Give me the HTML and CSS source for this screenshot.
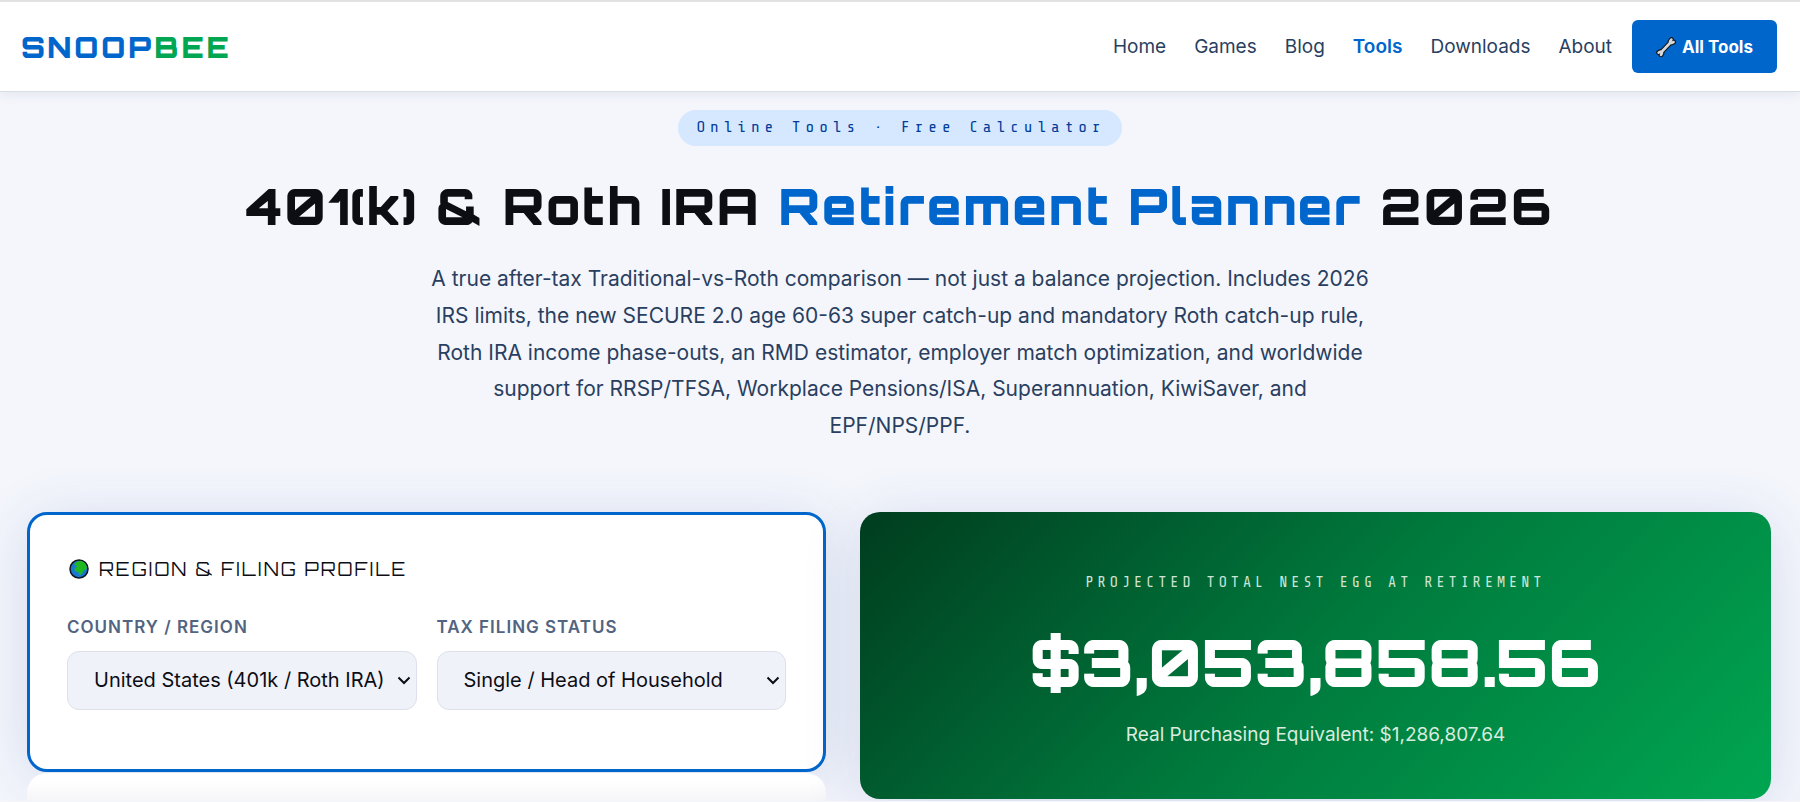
FILE: index.html
```html
<!DOCTYPE html>
<html lang="en">
<head>
  <meta charset="UTF-8">
  <meta name="viewport" content="width=device-width, initial-scale=1">
  <title>401(k) &amp; Roth IRA Retirement Planner 2026 - SnoopBee</title>
  <link rel="stylesheet" href="styles.css">
</head>
<body>
  <header class="site-header">
    <a class="logo" href="#">SNOOP<span>BEE</span></a>
    <nav class="nav">
      <a href="#">Home</a>
      <a href="#">Games</a>
      <a href="#">Blog</a>
      <a class="active" href="#">Tools</a>
      <a href="#">Downloads</a>
      <a href="#">About</a>
      <a class="nav-btn" href="#">
        <svg class="icon-wrench" viewBox="0 0 20 20" aria-hidden="true">
          <g fill="none" stroke-linecap="round" stroke-linejoin="round">
            <path d="M5 15.500 15 5M15.400 2.600 14 4.600 15.400 6 17.600 5M2.600 15.600 4.600 14.600 6 16 5 17.800" stroke="#14181d" stroke-width="5"/>
            <path d="M5 15.500 15 5M15.400 2.600 14 4.600 15.400 6 17.600 5M2.600 15.600 4.600 14.600 6 16 5 17.800" stroke="#d5d8dc" stroke-width="2.600"/>
          </g>
        </svg>
        All Tools
      </a>
    </nav>
  </header>

  <main>
    <section class="hero">
      <span class="badge">Online Tools · Free Calculator</span>
      <h1>401(k) &amp; Roth IRA <span>Retirement Planner</span> 2026</h1>
      <p>A true after-tax Traditional-vs-Roth comparison — not just a balance projection. Includes 2026 IRS limits, the new SECURE 2.0 age 60-63 super catch-up and mandatory Roth catch-up rule, Roth IRA income phase-outs, an RMD estimator, employer match optimization, and worldwide support for RRSP/TFSA, Workplace Pensions/ISA, Superannuation, KiwiSaver, and EPF/NPS/PPF.</p>
    </section>

    <div class="planner">
      <div class="inputs">
        <section class="card card-active">
          <h2>
            <svg class="icon-globe" viewBox="-2 -2 24 24" aria-hidden="true">
              <circle cx="10" cy="10" r="9" fill="#1878d2" stroke="#10161c" stroke-width="1.500"/>
              <path d="M5 5.500 8 2.600 12 1.800 16 4 18 8 17 11 14.500 11.600 12.800 15 10.800 16.600 9.600 13.400 6 12 5.400 9.400 8 7.600Z" fill="#1fb820"/>
            </svg>
            REGION &amp; FILING PROFILE
          </h2>
          <div class="fields">
            <div class="field">
              <label for="country">COUNTRY / REGION</label>
              <select id="country">
                <option>United States (401k / Roth IRA)</option>
              </select>
            </div>
            <div class="field">
              <label for="status">TAX FILING STATUS</label>
              <select id="status">
                <option>Single / Head of Household</option>
              </select>
            </div>
          </div>
        </section>
        <section class="card-next"></section>
      </div>

      <section class="result">
        <div class="result-label">PROJECTED TOTAL NEST EGG AT RETIREMENT</div>
        <div class="result-value">$3,053,858.56</div>
        <div class="result-sub">Real Purchasing Equivalent: $1,286,807.64</div>
      </section>
    </div>
  </main>
</body>
</html>
```
FILE: styles.css
```css
* {
  box-sizing: border-box;
}
body {
  margin: 0;
  background-color: #f4f6fc;
  color: #0d0d14;
  font-family: Inter, sans-serif;
}
a {
  text-decoration: none;
}

/* header */
.site-header {
  display: flex;
  align-items: center;
  justify-content: space-between;
  height: 92px;
  padding: 0 23px 0 21px;
  background-color: #fff;
  border-top: 2px solid #e2e2e2;
  border-bottom: 1px solid #d9dde8;
  box-shadow: 0 2px 12px rgba(20, 30, 80, 0.08);
}
.logo {
  color: #0066cc;
  font-family: Orbitron, "DejaVu Sans", sans-serif;
  font-size: 29px;
  font-weight: 900;
  letter-spacing: 3px;
}
.logo span {
  color: #00a651;
}
.nav {
  display: flex;
  align-items: center;
  gap: 28px;
  font-size: 19px;
  font-weight: 400;
}
.nav a {
  color: #2a3f5f;
}
.nav .active {
  color: #0066cc;
  font-weight: 600;
}
.nav .nav-btn {
  display: flex;
  align-items: center;
  gap: 6px;
  height: 53px;
  margin-left: -8px;
  padding: 0 24px;
  border-radius: 6px;
  background-color: #0066cc;
  color: #fff;
  font-size: 17px;
  font-weight: 700;
}
.icon-wrench {
  width: 20px;
  height: 20px;
}
.icon-globe {
  width: 24px;
  height: 24px;
}

/* hero */
.hero {
  display: flex;
  flex-direction: column;
  align-items: center;
  padding: 18px 24px 0;
  text-align: center;
}
.badge {
  height: 36px;
  padding: 0 16px 0 18px;
  border-radius: 18px;
  background-color: #d6e8ff;
  color: #003d99;
  font-family: "Share Tech Mono", "Liberation Mono", monospace;
  font-size: 16px;
  line-height: 34px;
  letter-spacing: 5px;
}
.hero h1 {
  margin: 25px 0 20px;
  font-family: Orbitron, "DejaVu Sans", sans-serif;
  font-size: 50px;
  font-weight: 900;
  line-height: 70px;
  letter-spacing: 2px;
}
.hero h1 span {
  color: #0066cc;
}
.hero p {
  max-width: 955px;
  margin: 0;
  color: #2a3f5f;
  font-size: 21px;
  line-height: 1.75;
}

/* planner */
.planner {
  display: grid;
  grid-template-columns: 799fr 911fr;
  gap: 34px;
  align-items: start;
  padding: 67px 29px 0 27px;
}
.card {
  border-radius: 20px;
  background-color: #fff;
}
.card-active {
  padding: 38px 37px 36px;
  border: 3px solid #0066cc;
  box-shadow: 0 8px 60px rgba(20, 60, 140, 0.14);
}
.card-next {
  height: 28px;
  margin-top: 1px;
  border-radius: 20px 20px 0 0;
  background: linear-gradient(#fff 8px, #f5f5f8);
}
.card h2 {
  display: flex;
  align-items: center;
  gap: 8px;
  margin: 0 0 30px;
  font-family: Orbitron, "DejaVu Sans", sans-serif;
  font-size: 18px;
  font-weight: 400;
  line-height: 32px;
  letter-spacing: 2px;
}
.fields {
  display: grid;
  grid-template-columns: 1fr 1fr;
  gap: 20px;
  padding-bottom: 23px;
}
.field label {
  display: block;
  margin-bottom: 12px;
  color: #52647f;
  font-size: 17px;
  font-weight: 600;
  line-height: 24px;
  letter-spacing: 1px;
}
.field select {
  appearance: none;
  width: 100%;
  height: 59px;
  padding: 0 24px 0 26px;
  border: 1px solid #dde0ea;
  border-radius: 12px;
  background: #f0f2fa url("data:image/svg+xml,%3Csvg xmlns='http://www.w3.org/2000/svg' width='14' height='9'%3E%3Cpath d='M1.500 1.500 7 7 12.500 1.500' fill='none' stroke='%230d0d14' stroke-width='2'/%3E%3C/svg%3E") no-repeat right 5px center;
  color: #0d0d14;
  font-family: Inter, sans-serif;
  font-size: 20px;
}
.result {
  padding: 58px 24px 49px;
  border-radius: 20px;
  background: linear-gradient(135deg, #003d1f, #007a3d 50%, #00a651);
  box-shadow: 0 8px 60px rgba(20, 60, 140, 0.14);
  color: #fff;
  text-align: center;
}
.result-label {
  color: #cce5d8;
  font-family: "Share Tech Mono", "Liberation Mono", monospace;
  font-size: 15px;
  line-height: 26px;
  letter-spacing: 4px;
}
.result-value {
  margin: 24px 0 16px;
  font-family: Orbitron, "DejaVu Sans", sans-serif;
  font-size: 65px;
  font-weight: 900;
  line-height: 84px;
  letter-spacing: -1px;
}
.result-sub {
  color: #d9ecdf;
  font-size: 19px;
  line-height: 30px;
}
```
